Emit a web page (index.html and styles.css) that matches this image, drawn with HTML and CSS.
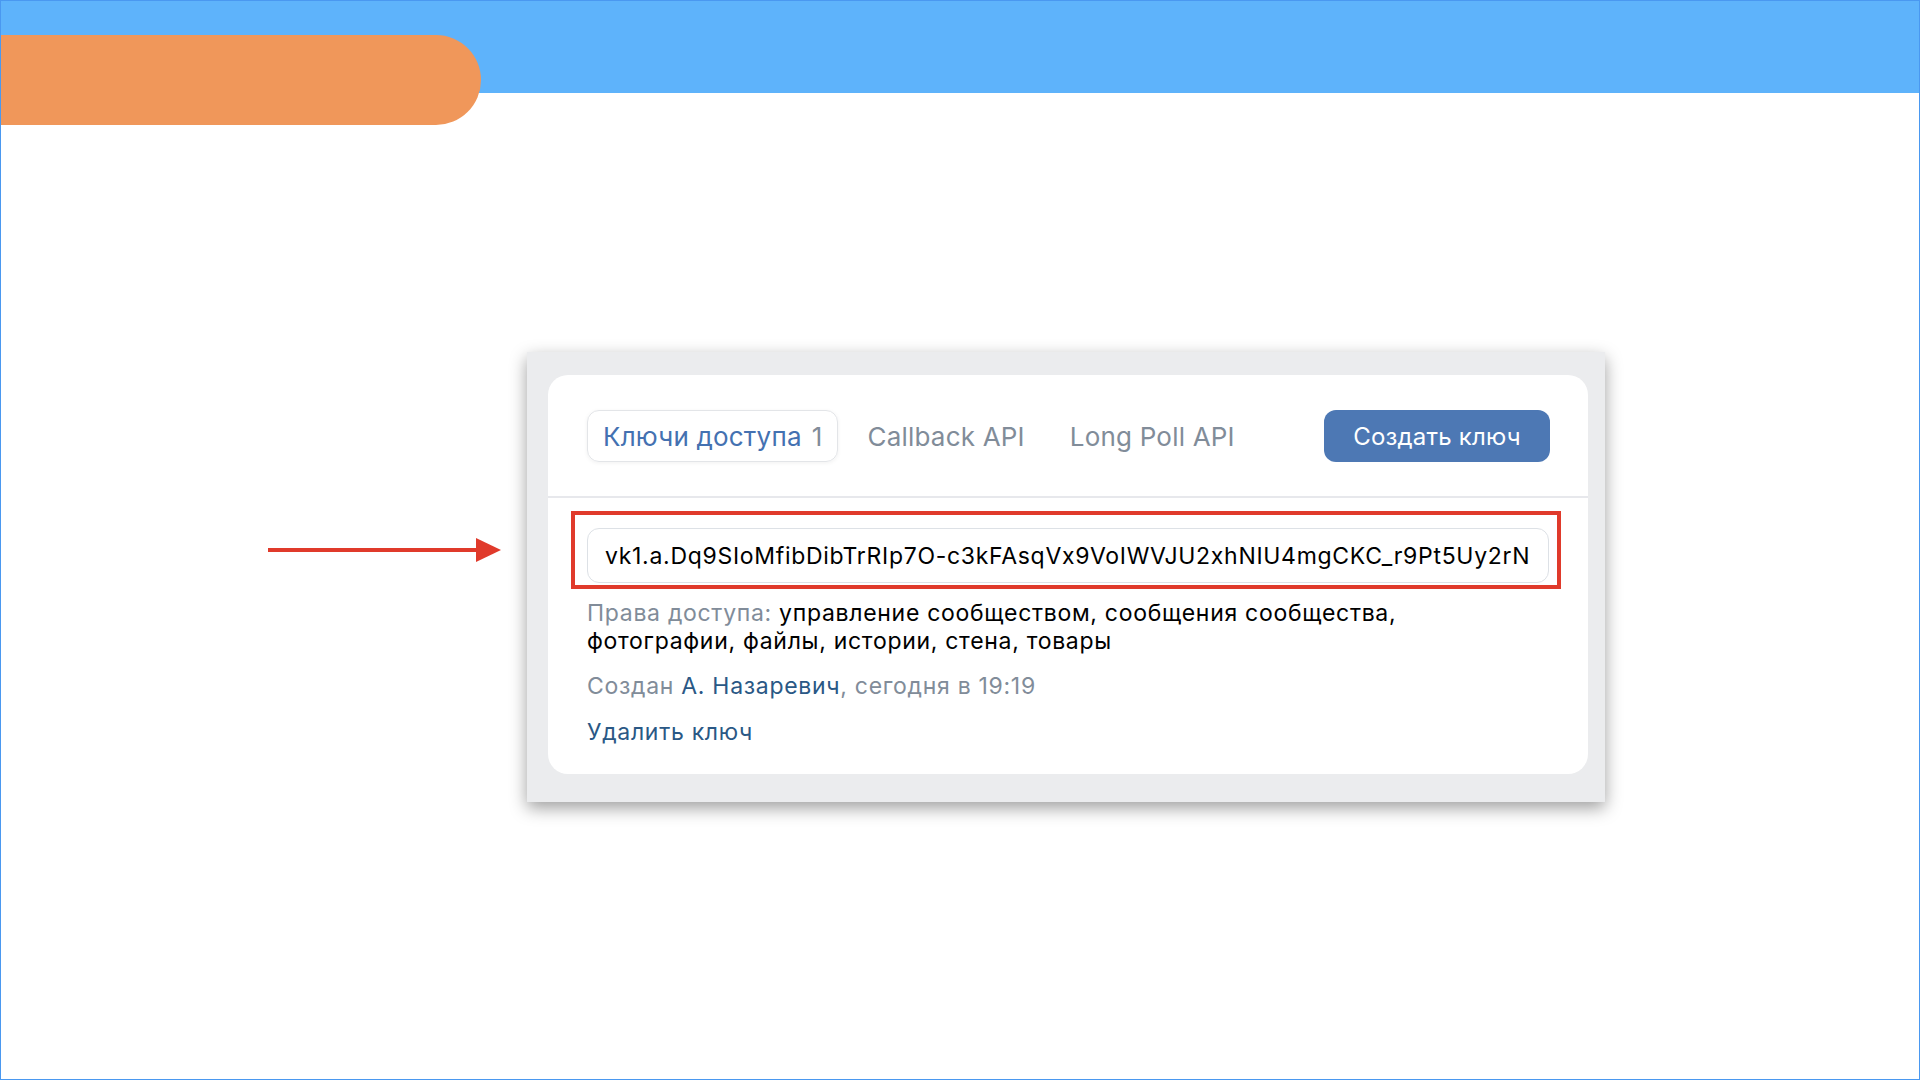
FILE: index.html
```html
<!DOCTYPE html>
<html lang="ru">
  <head>
    <meta charset="UTF-8" />
    <meta name="viewport" content="width=device-width, initial-scale=1.0" />
    <title>Ключи доступа</title>
    <link rel="stylesheet" href="styles.css">
  </head>
  <body>
    <div class="frame">
      <!-- Top band of the slide -->
      <header class="topbar"></header>
      <div class="pill"></div>

      <main class="stage">
        <div class="shot">
          <!-- pointer arrow -->
          <svg class="arrow" width="236" height="26" viewBox="0 0 236 26">
            <rect x="0" y="11" width="212" height="4" fill="#e03a2b" />
            <polygon points="208,1 233,13 208,25" fill="#e03a2b" />
          </svg>

          <div class="panel">
            <div class="panel-head">
              <div class="tabs">
                <div class="tab tab-active">Ключи доступа <span class="count">1</span></div>
                <div class="tab">Callback API</div>
                <div class="tab">Long Poll API</div>
              </div>
              <button class="btn">Создать ключ</button>
            </div>

            <div class="panel-body">
              <div class="key-wrap">
                <div class="key-field">vk1.a.Dq9SIoMfibDibTrRIp7O-c3kFAsqVx9VoIWVJU2xhNIU4mgCKC_r9Pt5Uy2rN</div>
                <span class="key-mark"></span>
              </div>

              <p class="rights">
                <span class="muted">Права доступа:</span> управление сообществом, сообщения сообщества,
                фотографии, файлы, истории, стена, товары
              </p>
              <p class="meta">
                Создан <a href="#" class="link">А. Назаревич</a>, сегодня в 19:19
              </p>
              <a href="#" class="delete">Удалить ключ</a>
            </div>
          </div>
        </div>
      </main>
    </div>
  </body>
</html>
```

FILE: styles.css
```css
/* Global */
* {
  margin: 0;
  padding: 0;
  box-sizing: border-box;
}
body {
  font-family: "Inter", "Noto Sans", sans-serif;
  background: #ffffff;
}

/* Slide frame */
.frame {
  position: relative;
  width: 1920px;
  height: 1080px;
  border: 1px solid #4a98f0;
  overflow: hidden;
}

.topbar {
  height: 92px;
  background: #5eb3fb;
}

.pill {
  position: absolute;
  left: 0;
  top: 34px;
  width: 480px;
  height: 90px;
  background: #f0975a;
  border-radius: 0 45px 45px 0;
}

/* Screenshot area */
.stage {
  padding: 259px 0 0 526px;
}

.shot {
  position: relative;
  width: 1078px;
  height: 450px;
  background: #ebecee;
  padding: 23px 17px 28px 21px;
  box-shadow: 0 6px 16px rgba(0, 0, 0, 0.38);
}

.arrow {
  position: absolute;
  left: -259px;
  top: 185px;
}

.panel {
  height: 399px;
  background: #ffffff;
  border-radius: 20px;
}

.panel-head {
  display: flex;
  align-items: center;
  padding: 35px 38px 34px 39px;
  border-bottom: 2px solid #e7e8ec;
}

.tabs {
  display: flex;
  gap: 13px;
}

.tab {
  display: flex;
  align-items: center;
  height: 52px;
  padding: 0 15px;
  font-size: 26px;
  letter-spacing: 0.2px;
  color: #818c99;
  border: 1px solid transparent;
  border-radius: 12px;
}

.tab-active {
  color: #4471b1;
  border-color: #e3e5e8;
  box-shadow: 0 1px 4px rgba(0, 0, 0, 0.06);
}

.count {
  margin-left: 10px;
  color: #818c99;
}

.btn {
  margin-left: auto;
  width: 226px;
  height: 52px;
  border: none;
  border-radius: 12px;
  background: #4d78b4;
  color: #ffffff;
  font-family: inherit;
  font-size: 24px;
  letter-spacing: 0.2px;
}

/* Key body */
.panel-body {
  padding: 30px 39px 0 39px;
}

.key-wrap {
  position: relative;
}

.key-field {
  display: flex;
  align-items: center;
  height: 55px;
  padding: 0 17px;
  border: 1px solid #dde1e6;
  border-radius: 12px;
  font-size: 23px;
  letter-spacing: 0.7px;
  color: #000000;
  white-space: nowrap;
  overflow: hidden;
}

.key-mark {
  position: absolute;
  top: -17px;
  left: -16px;
  right: -12px;
  bottom: -6px;
  border: 4px solid #e03a2b;
}

.rights {
  margin-top: 16px;
  max-width: 860px;
  font-size: 23px;
  line-height: 28px;
  letter-spacing: 0.7px;
  color: #000000;
}

.muted {
  color: #818c99;
}

.meta {
  margin-top: 17px;
  font-size: 23px;
  line-height: 28px;
  letter-spacing: 0.7px;
  color: #818c99;
}

.link {
  color: #2a5885;
  text-decoration: none;
}

.delete {
  display: inline-block;
  margin-top: 18px;
  font-size: 23px;
  line-height: 28px;
  letter-spacing: 0.7px;
  color: #2a5885;
  text-decoration: none;
}
```
